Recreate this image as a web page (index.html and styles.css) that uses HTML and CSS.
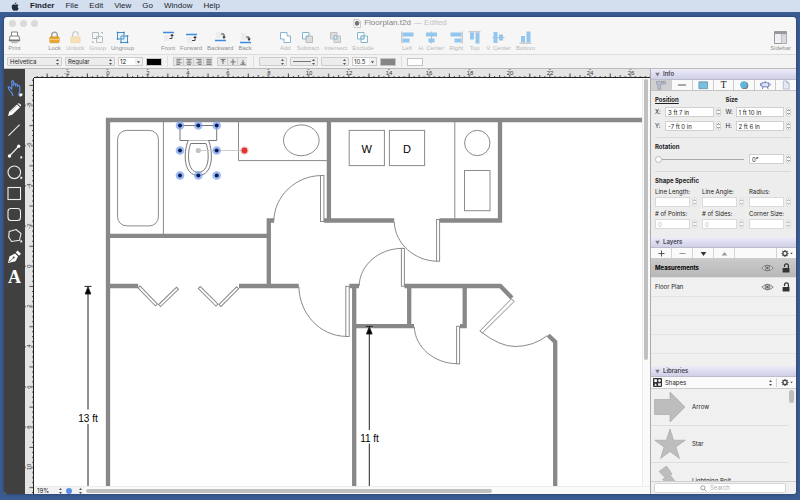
FILE: index.html
```html
<!DOCTYPE html>
<html lang="en">
<head>
<meta charset="utf-8">
<title>Floorplan.t2d</title>
<link rel="stylesheet" href="styles.css">
</head>
<body>
<svg class="defs" aria-hidden="true">
  <symbol id="updown" viewBox="0 0 5 8"><path d="M1 3L2.500 1L4 3zM1 5L2.500 7L4 5z" fill="#555"/></symbol>
  <symbol id="step" viewBox="0 0 5 10"><rect x=".5" y=".5" width="4" height="9" rx="2" fill="#fdfdfd" stroke="#c4c4c4" stroke-width=".7"/><path d="M1.400 4L2.500 2.600L3.600 4M1.400 6L2.500 7.400L3.600 6" fill="none" stroke="#555" stroke-width=".8"/></symbol>
  <symbol id="gear" viewBox="0 0 13 9"><circle cx="5" cy="4.500" r="2.100" fill="none" stroke="#444" stroke-width="1.300"/><path d="M5 1v1.200M5 6.800v1.200M1.500 4.500h1.200M7.300 4.500h1.200M2.500 2l.9.9M6.600 6.100l.9.9M2.500 7l.9-.9M6.600 2.900l.9-.9" stroke="#444" stroke-width="1.100"/><path d="M10.200 3.800h2.600l-1.300 1.500z" fill="#444"/></symbol>
  <symbol id="eye" viewBox="0 0 13 8"><path d="M.8 4.200Q6.500-1.600 12.200 4.200Q6.500 9.400 .8 4.200z" fill="#f4f4f4" stroke="#555" stroke-width=".7"/><circle cx="6.500" cy="4" r="2.600" fill="#bbb" stroke="#555" stroke-width=".6"/><circle cx="6.500" cy="4" r="1.100" fill="#555"/></symbol>
  <symbol id="unlocked" viewBox="0 0 8 10"><path d="M2.500 4V2.800a1.900 1.900 0 0 1 3.900 0V5" fill="none" stroke="#333" stroke-width="1.200"/><rect x=".6" y="5" width="6.900" height="4.600" rx=".5" fill="#333"/></symbol>
  <symbol id="tri" viewBox="0 0 5 5"><path d="M.2 .8h4.600L2.500 4.600z" fill="#7b7b86"/></symbol>
</svg>

<header class="menubar">
  <svg class="apple" viewBox="0 0 8 9" aria-hidden="true"><path d="M5.400.2C5.500 1.200 4.700 2.100 3.800 2.100 3.700 1.200 4.500.4 5.400.2zM6.700 4.600c0-1 .7-1.400.8-1.500C7 2.400 6.300 2.300 6 2.300c-.7 0-1.300.4-1.700.4S3.300 2.300 2.800 2.300C1.600 2.300.7 3.300.7 4.800.7 6.600 1.900 8.700 2.900 8.700c.5 0 .8-.3 1.400-.3s.8.3 1.400.3c.9 0 1.600-1.400 1.900-2.200-.6-.3-.9-1-.9-1.900z" fill="#222c3c"/></svg>
  <nav class="menus">
    <button class="app">Finder</button><button>File</button><button>Edit</button><button>View</button><button>Go</button><button>Window</button><button>Help</button>
  </nav>
</header>

<main class="window">
  <div class="titlebar">
    <div class="lights"><i></i><i></i><i></i></div>
    <h1 class="title"><svg viewBox="0 0 8 9" aria-hidden="true"><path d="M1 .5h4.500l2 2V8.500H1z" fill="#fff" stroke="#aaa" stroke-width=".6"/><path d="M2 3l2-1.500L6.500 3 6 6 3.500 7 2 5.500z" fill="#777"/></svg>Floorplan.t2d <span>— Edited</span></h1>
  </div>

  <div class="toolbar">
    <div class="group">
      <button><svg viewBox="0 0 13 13"><path d="M3.500 5V1h6v4M2 5h9l.8 5H1.200z" fill="#fff" stroke="#777" stroke-width=".9"/><path d="M1.500 8.500h10v1.600h-10z" fill="#777"/><path d="M3.500 11.700h6" stroke="#aaa" stroke-width="1"/></svg>Print</button>
    </div>
    <div class="group">
      <button><svg viewBox="0 0 13 13"><path d="M3.700 6V4a2.800 2.800 0 0 1 5.600 0v2" fill="none" stroke="#999" stroke-width="1.300"/><rect x="1.800" y="5.800" width="9.400" height="6" rx=".8" fill="#eba52e" stroke="#c98b25" stroke-width=".5"/><path d="M2 8.500h9" stroke="#f7cf78" stroke-width="1.200"/></svg>Lock</button>
      <button class="off"><svg viewBox="0 0 13 13"><path d="M3.700 6V3.500a2.800 2.800 0 0 1 5.600 0v1" fill="none" stroke="#ccc" stroke-width="1.300"/><rect x="1.800" y="5.800" width="9.400" height="6" rx=".8" fill="#f8dfb4" stroke="#ecd0a0" stroke-width=".5"/></svg>Unlock</button>
      <button class="off"><svg viewBox="0 0 13 13"><path d="M1.500 1.500h6v6h-6zM5.500 5.500h6v6h-6z" fill="#f6f6f6" stroke="#b5bcc0"/><path d="M10 1.500h1.500V3M1.500 10v1.500H3" fill="none" stroke="#b5bcc0"/></svg>Group</button>
      <button><svg viewBox="0 0 13 13"><path d="M1.500 1.500h6.500v6.500h-6.500zM5 5h6.500v6.500H5z" fill="#eaf3fa" stroke="#4a90c4"/><path d="M.8.800h1.500v1.500H.8zM7.300.800h1.500v1.500H7.300zM.8 7.300h1.500v1.500H.8zM10.800 4.300h1.500v1.500h-1.500zM10.800 10.800h1.500v1.500h-1.500zM4.300 10.800h1.500v1.500H4.300z" fill="#357fb8"/></svg>Ungroup</button>
    </div>
    <div class="group">
      <button><svg viewBox="0 0 13 13"><path d="M2 4h5v6H2z" fill="#ededed"/><path d="M1 1.500h11" stroke="#3f8ae0" stroke-width="1.300"/><path d="M7.500 7.500h2.500V4" fill="none" stroke="#333" stroke-width=".9"/><path d="M8.200 5L10 2.800 11.800 5z" fill="#333"/></svg>Front</button>
      <button><svg viewBox="0 0 13 13"><path d="M2 6h5v6H2z" fill="#ededed"/><path d="M1 3.500h11" stroke="#3f8ae0" stroke-width="1.300"/><path d="M7 9.500h3V6" fill="none" stroke="#333" stroke-width=".9"/><path d="M8.200 7L10 4.800 11.800 7z" fill="#333"/></svg>Forward</button>
      <button><svg viewBox="0 0 13 13"><path d="M2 1h5v6H2z" fill="#ededed"/><path d="M1 9.500h11" stroke="#3f8ae0" stroke-width="1.300"/><path d="M7 3h3v3" fill="none" stroke="#333" stroke-width=".9"/><path d="M8.200 5.500h3.600L10 8z" fill="#333"/></svg>Backward</button>
      <button><svg viewBox="0 0 13 13"><path d="M2 2h5v7H2z" fill="#ededed"/><path d="M1 11.500h11" stroke="#3f8ae0" stroke-width="1.300"/><path d="M7 6h3v2" fill="none" stroke="#333" stroke-width=".9"/><path d="M8.200 7.500h3.600L10 10z" fill="#333"/></svg>Back</button>
    </div>
    <div class="group off">
      <button><svg viewBox="0 0 13 13"><path d="M1.500 1.500H8V5h3.500v6.500H5V8H1.500z" fill="#fff" stroke="#85b5cf"/></svg>Add</button>
      <button><svg viewBox="0 0 13 13"><path d="M5 5h6.500v6.500H5z" fill="#ddd" stroke="#bbb"/><path d="M1.500 1.500H8V5H5v3H1.500z" fill="#fff" stroke="#85b5cf"/></svg>Subtract</button>
      <button><svg viewBox="0 0 13 13"><path d="M1.500 1.500H8V8H1.500zM5 5h6.500v6.500H5z" fill="#ddd" stroke="#c2c2c2"/><path d="M5 5h3v3H5z" fill="#fff" stroke="#85b5cf"/></svg>Intersect</button>
      <button><svg viewBox="0 0 13 13"><path d="M1.500 1.500H8V8H1.500zM5 5h6.500v6.500H5z" fill="#fff" stroke="#85b5cf"/><path d="M5 5h3v3H5z" fill="#e6eef2" stroke="#85b5cf"/></svg>Exclude</button>
    </div>
    <div class="group off">
      <button><svg viewBox="0 0 13 13"><path d="M.8.500v12" stroke="#aaa" stroke-width=".8"/><path d="M1.500 1.500h11v4h-11zM1.500 7.500h7v4h-7z" fill="#94c7ee"/></svg>Left</button>
      <button><svg viewBox="0 0 13 13"><path d="M6.500.500v12" stroke="#8fb4d0" stroke-width=".8"/><path d="M1 1.500h11v4H1zM3.500 7.500h6v4h-6z" fill="#94c7ee"/></svg>H. Center</button>
      <button><svg viewBox="0 0 13 13"><path d="M12.200.500v12" stroke="#aaa" stroke-width=".8"/><path d="M.5 1.500h11v4H.5zM4.500 7.500h7v4h-7z" fill="#94c7ee"/></svg>Right</button>
      <button><svg viewBox="0 0 13 13"><path d="M.5.800h12" stroke="#aaa" stroke-width=".8"/><path d="M2 1.500h4v7H2zM7.500 1.500h4v11h-4z" fill="#94c7ee"/></svg>Top</button>
      <button><svg viewBox="0 0 13 13"><path d="M.5 6.500h12" stroke="#8fb4d0" stroke-width=".8"/><path d="M1.500 1h4v11h-4zM7 3.500h4v6H7z" fill="#94c7ee"/></svg>V. Center</button>
      <button><svg viewBox="0 0 13 13"><path d="M.5 12.200h12" stroke="#aaa" stroke-width=".8"/><path d="M2 5h4v6.500H2zM7.500.500h4v11h-4z" fill="#94c7ee"/></svg>Bottom</button>
    </div>
    <div class="group end">
      <button><svg viewBox="0 0 13 13"><path d="M.5 .5h12v12H.5z" fill="#f0f0f2" stroke="#999"/><path d="M.5.500h12v2.500H.5z" fill="#999"/><path d="M7.500 3h5v9.500h-5z" fill="#d9d9e4" stroke="#aaa" stroke-width=".6"/></svg>Sidebar</button>
    </div>
  </div>

  <div class="format">
    <span class="select w55"><select aria-label="Font"><option>Helvetica</option></select><svg><use href="#updown"/></svg></span>
    <span class="select w50"><select aria-label="Style"><option>Regular</option></select><svg><use href="#updown"/></svg></span>
    <span class="combo"><input aria-label="Font size" value="12"><button aria-label="Sizes"><svg viewBox="0 0 7 8"><path d="M2 3.200h3L3.500 5.200z" fill="#444"/></svg></button></span>
    <button class="swatch black" aria-label="Text colour"></button>
    <i class="rule"></i>
    <span class="segs">
      <button aria-label="Align left"><svg viewBox="0 0 8 8"><path d="M1 1.500h6M1 3.500h4M1 5.500h6M1 7.300h4" /></svg></button>
      <button aria-label="Align center"><svg viewBox="0 0 8 8"><path d="M1 1.500h6M2 3.500h4M1 5.500h6M2 7.300h4"/></svg></button>
      <button aria-label="Align right"><svg viewBox="0 0 8 8"><path d="M1 1.500h6M3 3.500h4M1 5.500h6M3 7.300h4"/></svg></button>
      <button aria-label="Justify"><svg viewBox="0 0 8 8"><path d="M1 1.500h6M1 3.500h6M1 5.500h6M1 7.300h6"/></svg></button>
    </span>
    <span class="segs">
      <button aria-label="Align top"><svg viewBox="0 0 8 8"><path d="M1 1.500h6M4 2v5M2.500 4L4 2.500 5.500 4"/></svg></button>
      <button aria-label="Align middle"><svg viewBox="0 0 8 8"><path d="M1 4.500h6M4 1v7"/></svg></button>
      <button aria-label="Align bottom"><svg viewBox="0 0 8 8"><path d="M1 7.200h6M4 2v5M2.500 5L4 6.500 5.500 5"/></svg></button>
    </span>
    <i class="rule"></i>
    <span class="select w28"><select aria-label="Line start"><option></option></select><svg><use href="#updown"/></svg></span>
    <span class="select w28 line"><select aria-label="Line style"><option></option></select><svg><use href="#updown"/></svg></span>
    <span class="select w28"><select aria-label="Line end"><option></option></select><svg><use href="#updown"/></svg></span>
    <span class="combo"><input aria-label="Line width" value="10.5"><button aria-label="Widths"><svg viewBox="0 0 7 8"><path d="M2 3.200h3L3.500 5.200z" fill="#444"/></svg></button></span>
    <button class="swatch gray" aria-label="Line colour"></button>
    <i class="rule"></i>
    <button class="swatch white" aria-label="Fill colour"></button>
  </div>

  <div class="workspace">
    <nav class="tools" aria-label="Tools">
      <button aria-label="Select"><svg viewBox="0 0 21 21"><path d="M9 18L8 15Q4.500 11.500 4.300 9.800T6 9.500L7.800 11V3.500Q8.500 1.500 9.500 3.500V8M9.500 8V6Q10.700 4.600 11.500 6V8.500M11.500 8V6.500Q13 5.500 13.500 7V9M13.500 8.500Q15 6.500 15.800 8.500V13L15 15.500V18" fill="none" stroke="#5b8ee8" stroke-width="1.200"/><path d="M15.500 15.500h3v1.500l-1.500 1.500h-1.500z" fill="#fff"/></svg></button>
      <button aria-label="Pencil"><svg viewBox="0 0 21 21"><path d="M4 17L5.200 12.800 13 5.500 16 8.300 8.200 15.800z" fill="#fff"/><path d="M13.700 4.800Q14.700 3.800 15.800 4.700L16.700 5.600Q17.500 6.500 16.700 7.500z" fill="#fff"/><path d="M6.500 13L13 7" stroke="#999" stroke-width=".6"/></svg></button>
      <button aria-label="Line"><svg viewBox="0 0 21 21"><path d="M4.500 15.700L15.700 4.700" stroke="#eee" stroke-width="1.100"/></svg></button>
      <button aria-label="Connector"><svg viewBox="0 0 21 21"><path d="M5.500 15L14.500 5.500" stroke="#eee" stroke-width="1.100"/><circle cx="5.500" cy="15" r="1.700" fill="#fff"/><circle cx="14.700" cy="5.300" r="1.700" fill="#fff"/><path d="M16.500 15v3q2-1 2-1.800T16.500 15z" fill="#fff"/></svg></button>
      <button aria-label="Ellipse"><svg viewBox="0 0 21 21"><circle cx="10.300" cy="10.300" r="6.300" fill="none" stroke="#eee" stroke-width="1.100"/><path d="M16.500 14.500v3q2-1 2-1.800T16.500 14.500z" fill="#fff"/></svg></button>
      <button aria-label="Rectangle"><svg viewBox="0 0 21 21"><rect x="4" y="4.500" width="12.500" height="12" fill="none" stroke="#eee" stroke-width="1.100"/></svg></button>
      <button aria-label="Rounded rectangle"><svg viewBox="0 0 21 21"><rect x="4" y="4.500" width="12.500" height="12" rx="3" fill="none" stroke="#eee" stroke-width="1.100"/></svg></button>
      <button aria-label="Polygon"><svg viewBox="0 0 21 21"><path d="M12 4.500L17 8.500 15.500 15.300 7.500 16.500 4.700 12 5.200 6.500z" fill="none" stroke="#eee" stroke-width="1.100"/><path d="M16.500 15v3q2-1 2-1.800T16.500 15z" fill="#fff"/></svg></button>
      <button aria-label="Pen"><svg viewBox="0 0 21 21"><path d="M4 17L5.500 10.500 11 7.500 14 10.500 11.500 15.200z" fill="#fff"/><path d="M11.800 6.500L13.500 4.500 17 7.800 15 9.700z" fill="#fff"/><path d="M5 16L9.500 11.800" stroke="#444" stroke-width=".7"/><circle cx="9.700" cy="11.600" r="1" fill="#444"/></svg></button>
      <button class="glyph" aria-label="Text">A</button>
    </nav>

    <section class="editor" aria-label="Drawing">
      <div class="corner"></div>
      <svg class="ruler top">
        <defs><pattern id="hticks" patternUnits="userSpaceOnUse" x="51" y="0" width="40.220" height="9">
          <path d="M2.360 9V7M7.380 9V7M12.410 9V6M17.440 9V7M22.470 9V6M22.470 1V0M27.500 9V7M32.520 9V7M37.550 9V7M2.360 9V4.500" stroke="#333" stroke-width=".9"/>
        </pattern></defs>
        <rect width="100%" height="9" fill="url(#hticks)"/>
        <path d="M0 8.500H2000" stroke="#222"/>
        <g text-anchor="middle"><text x="33" y="6">-2</text><text x="74" y="6">0</text><text x="114" y="6">2</text><text x="154" y="6">4</text><text x="194" y="6">6</text><text x="235" y="6">8</text><text x="275" y="6">10</text><text x="315" y="6">12</text><text x="355" y="6">14</text><text x="395" y="6">16</text><text x="436" y="6">18</text><text x="476" y="6">20</text><text x="516" y="6">22</text><text x="556" y="6">24</text><text x="597" y="6">26</text></g>
      </svg>
      <svg class="ruler side">
        <defs><pattern id="vticks" patternUnits="userSpaceOnUse" x="0" y="5" width="9" height="40.220">
          <path d="M9 2.360H4.500M9 7.380H7M9 12.410H7M9 17.440H7M9 22.470H6M1 22.470H0M9 27.500H7M9 32.520H7M9 37.550H7" stroke="#333" stroke-width=".9"/>
        </pattern></defs>
        <rect width="9" height="100%" fill="url(#vticks)"/>
        <path d="M8.500 0V2000" stroke="#222"/>
        <g text-anchor="middle"><text transform="translate(6 27) rotate(-90)">-8</text><text transform="translate(6 67) rotate(-90)">-6</text><text transform="translate(6 108) rotate(-90)">-4</text><text transform="translate(6 148) rotate(-90)">-2</text><text transform="translate(6 188) rotate(-90)">0</text><text transform="translate(6 228) rotate(-90)">2</text><text transform="translate(6 268) rotate(-90)">4</text><text transform="translate(6 309) rotate(-90)">6</text><text transform="translate(6 349) rotate(-90)">8</text><text transform="translate(6 389) rotate(-90)">10</text></g>
      </svg>
      <svg class="canvas" role="img" aria-label="Floor plan">
        <g transform="translate(-34 -78)">
          <g class="thin">
            <path d="M163.400 122V234M238.500 122V160.600H327M454.800 122V219"/>
            <rect x="117.600" y="130.400" width="40.800" height="95.500" rx="9"/>
            <ellipse cx="301.300" cy="140.300" rx="17.800" ry="15.400"/>
            <rect x="349.200" y="130.400" width="35.200" height="35.200"/><rect x="389.400" y="130.400" width="35.200" height="35.200"/>
            <circle cx="477.300" cy="143" r="12.700"/><rect x="464.500" y="170.500" width="25.500" height="40.200"/>
            <path d="M273.800 221.500C274 196 296 175.700 321 175.600"/><rect x="320.500" y="175.500" width="3.400" height="46"/>
            <path d="M394.300 222C395 244 415 261 437 261.200"/><rect x="436.600" y="219.500" width="3" height="41.700"/>
            <path d="M359.200 286C359.500 265 379 248.500 402 248.400"/><rect x="401.400" y="248.400" width="3" height="37.800"/>
            <path d="M298.900 287C299.500 314 320 336 346 336.400"/><rect x="345.800" y="286.300" width="3.400" height="50.200"/>
            <path d="M414.300 327C415 347 434 363.500 457 363.700"/><rect x="456.600" y="326.300" width="3" height="37.500"/>
            <path d="M511.300 299L514.300 301.300 482.300 333 479.800 331zM481.500 332.200Q500 346.500 515 346.500Q533 346.500 547.500 335.500"/>
            <rect x="0" y="-1.500" width="25" height="2.800" transform="translate(139 287) rotate(46)"/>
            <rect x="0" y="-1.500" width="25" height="2.800" transform="translate(159.600 305.700) rotate(-44)"/>
            <rect x="0" y="-1.500" width="25" height="2.800" transform="translate(199.200 287.500) rotate(45)"/>
            <rect x="0" y="-1.500" width="25" height="2.800" transform="translate(220 305.500) rotate(-45)"/>
          </g>
          <g class="wall">
            <path d="M108 2000V120H2000M108 235.900H268.800M274 220.500H268.800V286M108 286H138.200M239 286H298.800"/>
            <path d="M328.900 120V220.500M324 220.500H394.200M439.600 220.500H500V120"/>
            <path d="M349.300 286H359M354.200 286V2000M404.500 286H500.300L512 298M354.200 326.200H414M409.200 286V326.200M464.700 286V326.200M460 326.200H466.800M548.300 335.300L555.200 342V2000"/>
          </g>
          <g class="fixture">
            <path d="M180 125.500H216.700V140.500H180z"/>
            <path d="M188.200 140.500C183 153 183.500 175.500 198.300 175.500S213.500 153 208.600 140.500"/>
            <path d="M190.700 143.500H206C209.800 153 209.500 172.300 198.300 172.300S187 153 190.700 143.500z"/>
          </g>
          <path d="M198 150.500H244" stroke="#ccc"/>
          <circle cx="198.300" cy="150.500" r="2.600" fill="#c2c2c2"/>
          <g class="halo"><circle cx="180" cy="125.500" r="4.300"/><circle cx="198.300" cy="125.500" r="4.300"/><circle cx="216.700" cy="125.500" r="4.300"/><circle cx="180" cy="150.500" r="4.300"/><circle cx="216.700" cy="150.500" r="4.300"/><circle cx="180" cy="175.500" r="4.300"/><circle cx="198.300" cy="175.500" r="4.300"/><circle cx="216.700" cy="175.500" r="4.300"/></g>
          <g class="knob"><circle cx="180" cy="125.500" r="2"/><circle cx="198.300" cy="125.500" r="2"/><circle cx="216.700" cy="125.500" r="2"/><circle cx="180" cy="150.500" r="2"/><circle cx="216.700" cy="150.500" r="2"/><circle cx="180" cy="175.500" r="2"/><circle cx="198.300" cy="175.500" r="2"/><circle cx="216.700" cy="175.500" r="2"/></g>
          <circle cx="244.500" cy="150.500" r="4.200" fill="#e8a9a6" opacity=".6"/><circle cx="244.500" cy="150.500" r="2.900" fill="#e0352f"/>
          <g class="measure">
            <path d="M84.500 286.400H91.500M88 290V409.500M88 424V2000M366 326.400H372.800M369.300 330V430M369.300 443.500V2000"/>
            <path d="M88 287L90.800 294H85.200zM369.300 327L372.100 334H366.500z" fill="#000"/>
          </g>
          <g text-anchor="middle"><text class="big" x="366.700" y="153">W</text><text class="big" x="406.900" y="153">D</text><text x="88" y="422">13 ft</text><text x="369.500" y="442">11 ft</text></g>
        </g>
      </svg>
      <div class="vscroll"><i></i></div>
      <div class="status">
        <span class="select zoom"><select aria-label="Zoom"><option>19%</option></select><svg><use href="#updown"/></svg></span>
        <button class="page" aria-label="Page"><i></i><svg><use href="#updown"/></svg></button>
        <div class="hscroll"><i></i></div>
      </div>
    </section>

    <aside class="sidebar">
      <h2><svg><use href="#tri"/></svg>Info</h2>
      <div class="tabs">
        <button class="on" aria-label="Geometry"><svg viewBox="0 0 13 11"><path d="M1.500 1.500h10v3H6v6H3v-6H1.500z" fill="#b9bfd0" stroke="#8d93a8" stroke-width=".7"/><path d="M7 2v1.500M9 2v1.500" stroke="#777" stroke-width=".6"/></svg></button>
        <button aria-label="Line"><svg viewBox="0 0 13 11"><path d="M2 5.500h9" stroke="#444" stroke-width="1"/></svg></button>
        <button aria-label="Fill"><svg viewBox="0 0 13 11"><path d="M2 2h9.500v7.500H2z" fill="#76bfe0" stroke="#668b9c" stroke-width=".8"/></svg></button>
        <button class="serif" aria-label="Text">T</button>
        <button aria-label="Shadow"><svg viewBox="0 0 13 11"><circle cx="7.200" cy="6" r="4" fill="#777"/><circle cx="6.200" cy="5.200" r="3.900" fill="#62b4d8"/></svg></button>
        <button aria-label="Canvas"><svg viewBox="0 0 13 11"><path d="M3 3h7.500v4.500H3zM6.700 1v2M4.500 7.500L3.500 10M9 7.500L10 10M1.500 3.500v3M12 3.500v3" fill="#dfe6ff" stroke="#6570a8" stroke-width=".9"/></svg></button>
        <button aria-label="Document"><svg viewBox="0 0 13 11"><path d="M3.500 1h4l2.500 2.500V10H3.500z" fill="#e3e9f5" stroke="#a3adc4" stroke-width=".8"/><path d="M7.500 1v2.500H10" fill="none" stroke="#a3adc4" stroke-width=".7"/></svg></button>
      </div>
      <div class="info">
        <div class="pairs">
          <b class="underline">Position</b><b>Size</b>
          <div class="field"><label for="x">X:</label><input id="x" value="3 ft 7 in"><button aria-label="Step X"><svg><use href="#step"/></svg></button></div>
          <div class="field"><label for="w">W:</label><input id="w" value="1 ft 10 in"><button aria-label="Step W"><svg><use href="#step"/></svg></button></div>
          <div class="field"><label for="y">Y:</label><input id="y" value="-7 ft 0 in"><button aria-label="Step Y"><svg><use href="#step"/></svg></button></div>
          <div class="field"><label for="h">H:</label><input id="h" value="2 ft 6 in"><button aria-label="Step H"><svg><use href="#step"/></svg></button></div>
        </div>
        <div class="rotation">
          <b>Rotation</b>
          <div class="rotrow"><input type="range" aria-label="Rotation" min="0" max="360" value="0"><div class="field short"><input aria-label="Rotation angle" value="0°"><button aria-label="Step rotation"><svg><use href="#step"/></svg></button></div></div>
        </div>
        <div class="specific">
          <b>Shape Specific</b>
          <div class="trio dim">
            <label for="ll">Line Length:</label><label for="la">Line Angle:</label><label for="ra">Radius:</label>
            <div class="field"><input id="ll"><button aria-label="Step length"><svg><use href="#step"/></svg></button></div>
            <div class="field"><input id="la"><button aria-label="Step angle"><svg><use href="#step"/></svg></button></div>
            <div class="field"><input id="ra"><button aria-label="Step radius"><svg><use href="#step"/></svg></button></div>
          </div>
          <div class="trio dim">
            <label for="np"># of Points:</label><label for="ns"># of Sides:</label><label for="cs">Corner Size:</label>
            <div class="field"><input id="np" value="0"><button aria-label="Step points"><svg><use href="#step"/></svg></button></div>
            <div class="field"><input id="ns" value="0"><button aria-label="Step sides"><svg><use href="#step"/></svg></button></div>
            <div class="field"><input id="cs"><button aria-label="Step corner"><svg><use href="#step"/></svg></button></div>
          </div>
        </div>
      </div>

      <h2><svg><use href="#tri"/></svg>Layers</h2>
      <div class="actions">
        <button aria-label="Add layer"><svg viewBox="0 0 9 9"><path d="M4.500 1.500v6M1.500 4.500h6" stroke="#444" stroke-width=".9"/></svg></button>
        <button aria-label="Remove layer"><svg viewBox="0 0 9 9"><path d="M1.500 4.500h6" stroke="#888" stroke-width=".9"/></svg></button>
        <button aria-label="Move down"><svg viewBox="0 0 9 9"><path d="M1.700 3h5.600L4.500 7z" fill="#333"/></svg></button>
        <button aria-label="Move up"><svg viewBox="0 0 9 9"><path d="M1.700 6.500h5.600L4.500 3z" fill="#999"/></svg></button>
        <button class="more" aria-label="Layer options"><svg class="gear"><use href="#gear"/></svg></button>
      </div>
      <ul class="layers">
        <li class="on"><span>Measurements</span><button aria-label="Visible"><svg class="eye"><use href="#eye"/></svg></button><button aria-label="Unlocked"><svg class="lock"><use href="#unlocked"/></svg></button></li>
        <li><span>Floor Plan</span><button aria-label="Visible"><svg class="eye"><use href="#eye"/></svg></button><button aria-label="Unlocked"><svg class="lock"><use href="#unlocked"/></svg></button></li>
        <li></li><li></li><li></li>
      </ul>

      <h2><svg><use href="#tri"/></svg>Libraries</h2>
      <div class="library">
        <svg class="grid4" viewBox="0 0 9 9" aria-hidden="true"><rect width="9" height="9" rx="1" fill="#333"/><path d="M1.300 1.300h2.600v2.600H1.300zM5.200 5.200h2.600v2.600H5.200zM1.300 7.800l1.300-2.600 1.300 2.600z" fill="#fff"/><circle cx="6.500" cy="2.600" r="1.300" fill="#fff"/></svg>
        <span class="pick"><select aria-label="Library"><option>Shapes</option></select><svg><use href="#updown"/></svg></span>
        <button class="more" aria-label="Library options"><svg class="gear"><use href="#gear"/></svg></button>
      </div>
      <div class="shapes">
        <ul>
          <li><svg viewBox="0 0 32 32"><path d="M.5 8.500H16V1L31 16 16 31V23.500H.5z"/></svg>Arrow</li>
          <li><svg viewBox="0 0 32 32"><path d="M16 1L19.600 12.200H31.300L21.900 19 25.500 30.500 16 23.500 6.500 30.500 10.100 19 .7 12.200H12.400z"/></svg>Star</li>
          <li><svg viewBox="0 0 32 32"><path d="M5 6.500L12.500 1L18 9L16.500 10.500L23 18.500L21 20L31 31L14 22L16 20.500L8.500 14.500L11 12.500z"/></svg>Lightning Bolt</li>
        </ul>
        <i></i>
      </div>
      <div class="search"><label><svg viewBox="0 0 8 8"><circle cx="3.300" cy="3.300" r="2.400"/><path d="M5 5l2.300 2.300"/></svg><input type="search" placeholder="Search" aria-label="Search"></label></div>
    </aside>
  </div>
</main>
</body>
</html>
```
FILE: styles.css
```css
* { box-sizing: border-box; }

body {
  margin: 0;
  height: 100vh;
  display: flex;
  flex-direction: column;
  overflow: hidden;
  background: #3b5c92;
  color: #222;
  font: 6px/8px Inter, "Liberation Sans", sans-serif;
}

button, input, select {
  margin: 0;
  padding: 0;
  border: 0;
  background: none;
  color: inherit;
  font: inherit;
  appearance: none;
  outline: none;
  min-width: 0;
}
button { display: flex; align-items: center; justify-content: center; }
svg { display: block; flex: none; }
ul { list-style: none; margin: 0; padding: 0; }
.defs { position: absolute; width: 0; height: 0; }

/* Menu bar */
.menubar {
  display: flex;
  align-items: center;
  height: 12px;
  flex: none;
  padding-left: 11px;
  background: #d3dfef;
  font: 8px/12px "Liberation Sans", sans-serif;
  color: #1c2430;
}
.apple { width: 8px; height: 9px; }
.menus { display: flex; gap: 11px; margin-left: 11px; }
.menus .app { font-weight: bold; }

/* Window */
.window {
  flex: 1;
  min-height: 0;
  display: flex;
  flex-direction: column;
  margin: 5px 4px 6px;
  overflow: hidden;
  border-radius: 3px;
  background: #f6f6f6;
  box-shadow: 0 0 3px #1f3660;
}

.titlebar {
  display: grid;
  grid-template-columns: 1fr auto 1fr;
  align-items: center;
  height: 12px;
  padding: 0 5px;
  flex: none;
}
.lights { display: flex; gap: 4px; }
.lights i { width: 7px; height: 7px; border-radius: 50%; background: #dadada; }
.title {
  display: flex;
  align-items: center;
  gap: 3px;
  margin: 0;
  font: 8px/12px "Liberation Sans", sans-serif;
  color: #858585;
}
.title svg { width: 8px; height: 9px; }
.title span { color: #c2c2c2; }

.toolbar {
  display: flex;
  gap: 27px;
  height: 26px;
  flex: none;
  padding: 2px 5px 0 4px;
  border-bottom: 1px solid #dcdcdc;
  font: 6px/8px "Liberation Sans", sans-serif;
  color: #8f8f8f;
}
.group { display: flex; gap: 5px; align-items: flex-start; }
.group button { flex-direction: column; white-space: nowrap; }
.group svg { width: 13px; height: 13px; }
.off { color: #b8b8b8; }
.end { margin-left: auto; }

/* Format bar */
.format {
  display: flex;
  align-items: center;
  gap: 3px;
  height: 14px;
  flex: none;
  padding: 0 3px;
  border-bottom: 1px solid #bbb;
  background: #f3f3f3;
}
.select { position: relative; display: flex; align-items: center; height: 9px; border: 1px solid #ccc; border-radius: 1px; background: #ececec; }
.select select { width: 100%; padding-left: 2px; line-height: 7px; }
.select svg { position: absolute; right: 1px; width: 5px; height: 8px; pointer-events: none; }
.w55 { width: 55px; }
.w50 { width: 50px; }
.w28 { width: 28px; }
.line::before { content: ""; position: absolute; left: 2px; width: 18px; height: 1px; background: #777; }
.combo { display: flex; width: 25px; height: 9px; border: 1px solid #ccc; background: #fff; }
.combo input { flex: 1; width: 0; padding-left: 1px; }
.combo button { width: 7px; background: #efefef; }
.combo svg { width: 7px; height: 8px; }
.swatch { width: 16px; height: 8px; border: 1px solid #c4c4c4; }
.black { background: #000; }
.gray { background: #858585; }
.white { background: #fff; }
.rule { width: 1px; height: 11px; margin: 0 2px; background: #dedede; }
.segs { display: flex; height: 9px; margin-right: 1px; border: solid #ccc; border-width: 1px 0; background: #e8e8e8; }
.segs button { width: 10px; border-left: 1px solid #ccc; }
.segs svg { width: 8px; height: 7px; fill: none; stroke: #666; stroke-width: 1px; }

/* Workspace */
.workspace { flex: 1; min-height: 0; display: flex; }

.tools { width: 21px; flex: none; padding-top: 9px; background: #404040; }
.tools button { width: 21px; height: 21px; }
.tools svg { width: 21px; height: 21px; }
.tools .glyph { font: bold 18px/21px "Liberation Serif", serif; color: #fff; }

.editor {
  flex: 1;
  min-width: 0;
  display: grid;
  grid-template-columns: 9px 1fr 8px;
  grid-template-rows: 9px 1fr 8px;
}
.corner, .ruler { background: #e4e4e4; }
.ruler { overflow: hidden; width: 100%; height: 100%; font: 6px "Liberation Sans", sans-serif; fill: #333; }
.ruler.top { grid-area: 1 / 2 / 2 / 4; }
.ruler.side { grid-area: 2 / 1 / 4 / 2; }
.canvas {
  grid-area: 2 / 2;
  width: 100%;
  height: 100%;
  overflow: hidden;
  background: #fff;
  font: 10px "Liberation Sans", sans-serif;
}
.canvas .big { font-size: 11px; }
.thin, .fixture { fill: #fff; stroke: #8a8a8a; }
.thin path { fill: none; }
.fixture { stroke: #777; }
.wall { fill: none; stroke: #888; stroke-width: 4.300px; }
.halo { fill: #7da3ee; opacity: .75; }
.knob { fill: #0b1d55; }
.measure { fill: none; stroke: #222; }

.vscroll { grid-area: 2 / 3; padding: 1px 2px 0 1px; background: #fafafa; border-left: 1px solid #ececec; }
.vscroll i { display: block; height: 69%; width: 4px; border-radius: 2px; background: #c0c0c0; }
.status { grid-area: 3 / 2 / 4 / 4; display: flex; align-items: center; border-top: 1px solid #ececec; background: #fafafa; }
.zoom { width: 30px; height: 7px; padding-left: 1px; border: 0; background: #f2f2f2; }
.page { gap: 6px; width: 20px; height: 7px; background: #f2f2f2; }
.page i { width: 6px; height: 6px; border-radius: 50%; background: #5b8fe6; }
.page svg { width: 5px; height: 8px; }
.hscroll { flex: 1; padding-left: 2px; }
.hscroll i { display: block; width: 72%; height: 4px; border-radius: 2px; background: #c0c0c0; }

/* Sidebar */
.sidebar {
  width: 146px;
  flex: none;
  display: flex;
  flex-direction: column;
  border-left: 1px solid #aaa;
  background: #f0f0f0;
}
h2 {
  display: flex;
  align-items: center;
  gap: 3px;
  height: 11px;
  flex: none;
  margin: 0;
  padding-left: 4px;
  border-bottom: 1px solid #bcbccb;
  background: linear-gradient(#ededf8, #cfcfe8);
  font-size: 6px;
  font-weight: 600;
  color: #444450;
}
h2 svg { width: 5px; height: 5px; }

.tabs { display: flex; height: 11px; flex: none; border-bottom: 1px solid #c4c4c4; background: #fafafa; }
.tabs button { flex: 1; border-left: 1px solid #ccc; }
.tabs button:first-child { border-left: 0; }
.tabs .on { background: #d0d0d0; }
.tabs svg { width: 12px; height: 10px; }
.tabs .serif { font: 10px/10px "Liberation Serif", serif; }

.info { height: 146px; flex: none; padding: 5px 5px 0 4px; background: #ededed; }
.info b { display: block; font-weight: 700; }
.underline { text-decoration: underline; }
.pairs { display: grid; grid-template-columns: 1fr 1fr; gap: 4px 5px; padding-bottom: 6px; }
.pairs b { margin-bottom: -1px; }
.field { display: flex; align-items: center; height: 10px; }
.field label { width: 10px; }
.field input { flex: 1; width: 0; height: 10px; padding-left: 2px; border: 1px solid #d0d0d0; background: #fff; }
.field button { width: 5px; margin-left: 2px; }
.field svg { width: 5px; height: 10px; }
.rotation, .specific { border-top: 1px solid #dadada; padding-top: 5px; }
.rotrow { display: flex; align-items: center; gap: 5px; margin-top: 3px; padding-bottom: 7px; }
.rotrow input[type=range] { flex: 1; height: 8px; background: linear-gradient(#aaa, #aaa) center / 100% 1px no-repeat; }
.rotrow input[type=range]::-webkit-slider-thumb { appearance: none; width: 7px; height: 7px; border: 1px solid #bbb; border-radius: 50%; background: #fff; }
.short { width: 42px; }
.trio { display: grid; grid-template-columns: repeat(3, 1fr); gap: 1px 5px; margin-top: 3px; white-space: nowrap; }
.dim input { color: #bbb; border-color: #dadada; }
.dim svg { opacity: .6; }

.actions { display: flex; height: 11px; flex: none; border-bottom: 1px solid #ccc; background: #fafafa; }
.actions button { width: 21px; border-right: 1px solid #d4d4d4; }
.actions svg { width: 9px; height: 9px; }
.actions .more, .library .more { width: 20px; margin-left: auto; border-left: 1px solid #d4d4d4; border-right: 0; }
.actions .gear, .gear { width: 13px; height: 9px; }

.layers { height: 107px; flex: none; }
.layers li { display: flex; align-items: center; gap: 8px; height: 19px; padding: 0 6px 0 4px; border-bottom: 1px solid #e2e2e2; }
.layers span { flex: 1; }
.layers .on { background: linear-gradient(#cacaca, #b8b8b8); font-weight: 700; color: #000; }
.eye { width: 13px; height: 8px; }
.lock { width: 8px; height: 10px; }

.library { display: flex; align-items: center; height: 12px; flex: none; padding-left: 2px; border-bottom: 1px solid #ccc; background: #fafafa; }
.grid4 { width: 9px; height: 9px; }
.pick { position: relative; flex: 1; display: flex; align-items: center; }
.pick select { width: 100%; padding-left: 3px; }
.pick svg { position: absolute; right: 3px; width: 5px; height: 8px; pointer-events: none; }

.shapes { flex: 1; min-height: 0; display: flex; overflow: hidden; }
.shapes ul { flex: 1; }
.shapes li { display: flex; align-items: center; gap: 6px; height: 37px; padding-left: 3px; border-bottom: 1px solid #dedede; }
.shapes svg { width: 32px; height: 32px; fill: #bdbdbd; stroke: #999; stroke-width: .5px; }
.shapes i { width: 5px; height: 13px; margin: 1px 2px 0 1px; border-radius: 3px; background: #bdbdbd; }

.search { height: 13px; flex: none; padding: 1px 10px 1px 3px; border-top: 1px solid #d0d0d0; }
.search label { display: flex; align-items: center; justify-content: center; gap: 3px; height: 10px; border: 1px solid #d6d6d6; border-radius: 2px; background: #fff; }
.search svg { width: 7px; height: 7px; fill: none; stroke: #777; stroke-width: .8px; }
.search input { width: 30px; }
.search input::placeholder { color: #b0b0b0; }
```
